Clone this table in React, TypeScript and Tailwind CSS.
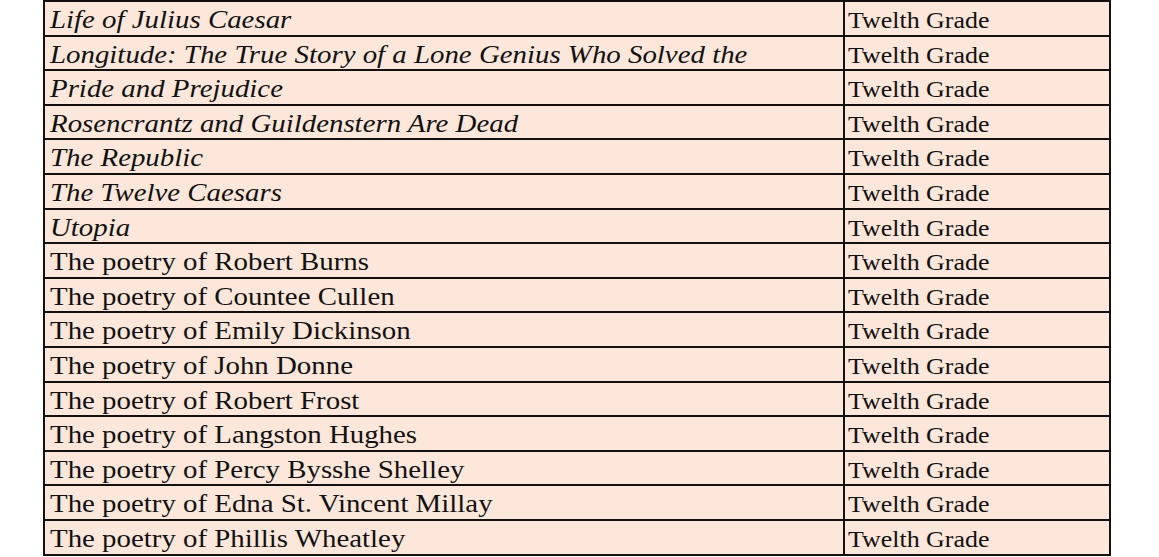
import React from "react";

const rows: { title: string; italic: boolean }[] = [
  { title: "Life of Julius Caesar", italic: true },
  { title: "Longitude: The True Story of a Lone Genius Who Solved the", italic: true },
  { title: "Pride and Prejudice", italic: true },
  { title: "Rosencrantz and Guildenstern Are Dead", italic: true },
  { title: "The Republic", italic: true },
  { title: "The Twelve Caesars", italic: true },
  { title: "Utopia", italic: true },
  { title: "The poetry of Robert Burns", italic: false },
  { title: "The poetry of Countee Cullen", italic: false },
  { title: "The poetry of Emily Dickinson", italic: false },
  { title: "The poetry of John Donne", italic: false },
  { title: "The poetry of Robert Frost", italic: false },
  { title: "The poetry of Langston Hughes", italic: false },
  { title: "The poetry of Percy Bysshe Shelley", italic: false },
  { title: "The poetry of Edna St. Vincent Millay", italic: false },
  { title: "The poetry of Phillis Wheatley", italic: false },
];

export default function App() {
  return (
    <div className="w-[1159px] h-[557px] bg-white overflow-hidden" style={{ fontFamily: '"Liberation Serif", "Times New Roman", serif' }}>
      <div className="ml-[43px] w-[1068px] border-l-2 border-t-2 border-[#111] bg-[#fde7da] text-[#111]">
        {rows.map((r, i) => (
          <div key={i} className="flex h-[34.6px]">
            <div className="w-[800px] shrink-0 border-r-2 border-b-2 border-[#111] pl-[5px] pt-[5px] overflow-hidden whitespace-nowrap">
              <span className={`inline-block origin-left scale-x-[1.11] text-[26px] leading-none ${r.italic ? "italic" : ""}`}>
                {r.title}
              </span>
            </div>
            <div className="flex-1 border-r-2 border-b-2 border-[#111] pl-[3px] pt-[6px] overflow-hidden whitespace-nowrap">
              <span className="inline-block origin-left scale-x-[1.08] text-[24px] leading-none">Twelth Grade</span>
            </div>
          </div>
        ))}
      </div>
    </div>
  );
}
